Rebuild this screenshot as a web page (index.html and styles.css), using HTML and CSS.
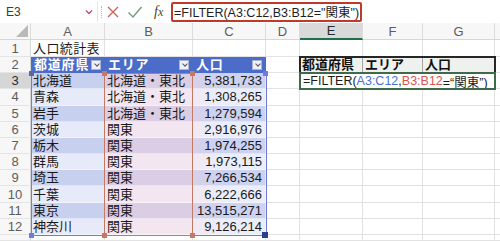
FILE: index.html
```html
<!DOCTYPE html>
<html lang="ja">
<head>
<meta charset="utf-8">
<link rel="stylesheet" href="styles.css">
</head>
<body>
<div class="app">
  <div class="fbar">
    <div class="namebox"><span class="nb-text">E3</span>
      <svg class="nb-arrow" width="8" height="6" viewBox="0 0 8 6"><path d="M1 1.5 L4 4.5 L7 1.5" fill="none" stroke="#c04a6a" stroke-width="1.3"/></svg>
    </div>
    <div class="fsep"></div>
    <div class="fbtn"><svg width="14" height="14" viewBox="0 0 14 14"><path d="M2 2 L12 12 M12 2 L2 12" stroke="#d06060" stroke-width="1.4" fill="none"/></svg></div>
    <div class="fbtn"><svg width="16" height="14" viewBox="0 0 16 14"><path d="M1.5 7.5 L6 12 L14.5 2" stroke="#6aa07a" stroke-width="1.4" fill="none"/></svg></div>
    <div class="fx">f<span class="fx-x">x</span></div>
    <div class="formula">=FILTER(A3:C12,B3:B12="関東")</div>
  </div>

  <div class="sheet">
    <!-- column headers -->
    <div class="c ch corner"><svg width="12" height="12" viewBox="0 0 12 12"><path d="M12 0 L12 12 L0 12 Z" fill="#b9b9b9"/></svg></div>
    <div class="c ch">A</div>
    <div class="c ch">B</div>
    <div class="c ch">C</div>
    <div class="c ch">D</div>
    <div class="c ch ch-sel">E</div>
    <div class="c ch">F</div>
    <div class="c ch">G</div>
    <div class="c ch last"></div>

    <!-- row 1 -->
    <div class="c rh">1</div>
    <div class="c txt title">人口統計表</div>
    <div class="c"></div><div class="c"></div><div class="c"></div><div class="c"></div><div class="c"></div><div class="c"></div><div class="c last"></div>

    <!-- row 2 -->
    <div class="c rh">2</div>
    <div class="c th"><span>都道府県</span><i class="dd"></i></div>
    <div class="c th"><span>エリア</span><i class="dd"></i></div>
    <div class="c th"><span>人口</span><i class="dd"></i></div>
    <div class="c"></div>
    <div class="c eh">都道府県</div>
    <div class="c eh">エリア</div>
    <div class="c eh">人口</div>
    <div class="c last"></div>

    <!-- rows 3-12 -->
    <div class="c rh rh-sel">3</div>
    <div class="c txt a odd">北海道</div><div class="c txt b odd">北海道・東北</div><div class="c num cc odd">5,381,733</div>
    <div class="c"></div><div class="c"></div><div class="c"></div><div class="c"></div><div class="c last"></div>

    <div class="c rh">4</div>
    <div class="c txt a even">青森</div><div class="c txt b even">北海道・東北</div><div class="c num cc even">1,308,265</div>
    <div class="c"></div><div class="c"></div><div class="c"></div><div class="c"></div><div class="c last"></div>

    <div class="c rh">5</div>
    <div class="c txt a odd">岩手</div><div class="c txt b odd">北海道・東北</div><div class="c num cc odd">1,279,594</div>
    <div class="c"></div><div class="c"></div><div class="c"></div><div class="c"></div><div class="c last"></div>

    <div class="c rh">6</div>
    <div class="c txt a even">茨城</div><div class="c txt b even">関東</div><div class="c num cc even">2,916,976</div>
    <div class="c"></div><div class="c"></div><div class="c"></div><div class="c"></div><div class="c last"></div>

    <div class="c rh">7</div>
    <div class="c txt a odd">栃木</div><div class="c txt b odd">関東</div><div class="c num cc odd">1,974,255</div>
    <div class="c"></div><div class="c"></div><div class="c"></div><div class="c"></div><div class="c last"></div>

    <div class="c rh">8</div>
    <div class="c txt a even">群馬</div><div class="c txt b even">関東</div><div class="c num cc even">1,973,115</div>
    <div class="c"></div><div class="c"></div><div class="c"></div><div class="c"></div><div class="c last"></div>

    <div class="c rh">9</div>
    <div class="c txt a odd">埼玉</div><div class="c txt b odd">関東</div><div class="c num cc odd">7,266,534</div>
    <div class="c"></div><div class="c"></div><div class="c"></div><div class="c"></div><div class="c last"></div>

    <div class="c rh">10</div>
    <div class="c txt a even">千葉</div><div class="c txt b even">関東</div><div class="c num cc even">6,222,666</div>
    <div class="c"></div><div class="c"></div><div class="c"></div><div class="c"></div><div class="c last"></div>

    <div class="c rh">11</div>
    <div class="c txt a odd">東京</div><div class="c txt b odd">関東</div><div class="c num cc odd">13,515,271</div>
    <div class="c"></div><div class="c"></div><div class="c"></div><div class="c"></div><div class="c last"></div>

    <div class="c rh">12</div>
    <div class="c txt a even">神奈川</div><div class="c txt b even">関東</div><div class="c num cc even">9,126,214</div>
    <div class="c"></div><div class="c"></div><div class="c"></div><div class="c"></div><div class="c last"></div>

    <div class="c rh"></div>
    <div class="c"></div><div class="c"></div><div class="c"></div><div class="c"></div><div class="c"></div><div class="c"></div><div class="c"></div><div class="c last"></div>

    <!-- overlays -->
    <div class="ref ref-blue"></div>
    <div class="ref ref-red"></div>
    <i class="hd hd-blue h-tl"></i>
    <i class="hd hd-blue h-tr"></i>
    <i class="hd hd-blue h-bl"></i>
    <i class="hd hd-navy h-br"></i>
    <i class="hd hd-red h-rtl"></i>
    <i class="hd hd-red h-rtr"></i>
    <i class="hd hd-red h-rbl"></i>
    <i class="hd hd-red h-rbr"></i>
    <div class="ebox-head"></div>
    <div class="ebox">=FILTER(<span class="r-blue">A3:C12</span>,<span class="r-red">B3:B12</span>=“関東”)</div>
  </div>
</div>
</body>
</html>
```

FILE: styles.css
```css
* { box-sizing: border-box; }
html, body { margin: 0; padding: 0; background: #ffffff; }
body { width: 500px; height: 241px; overflow: hidden; font-family: "Liberation Sans", "Noto Sans CJK JP", sans-serif; }

.app { width: 500px; height: 241px; display: flex; flex-direction: column; }

/* formula bar */
.fbar { height: 24px; display: flex; align-items: center; background: #fff; }
.namebox { width: 98px; height: 21px; display: flex; align-items: center; justify-content: space-between; padding: 0 4px 0 6px; border-right: 1px solid #e6e6e6; }
.nb-text { font-size: 12px; color: #3a3a3a; }
.nb-arrow { display: block; }
.fsep { width: 1px; height: 12px; margin-left: 3px; border-left: 1px dotted #bbb; }
.fbtn { width: 22px; display: flex; justify-content: center; align-items: center; }
.fbtn:first-of-type { margin-left: 0; }
.fsep + .fbtn { margin-left: 0; }
.fx { width: 17px; margin-left: 8px; font-family: "Liberation Serif", serif; font-style: italic; font-size: 14px; color: #444; }
.fx-x { font-size: 12px; }
.formula { height: 20px; width: 191px; border: 2px solid #c0392b; border-radius: 2px; font-size: 12.5px; color: #1e1e1e; display: flex; align-items: center; padding-left: 1px; white-space: nowrap; overflow: hidden; }

/* sheet */
.sheet { position: relative; display: grid;
  grid-template-columns: 31px 74px 88px 73px 34px 63px 60px 72px 5px;
  grid-template-rows: 17px 17px 16px repeat(10, 16.2px) 6px; }
.c { border-right: 1px solid #e2e2e2; border-bottom: 1px solid #e2e2e2; font-size: 13px; line-height: 1; display: flex; align-items: center; white-space: nowrap; min-width: 0; }
.c.last { border-right: 0; }

.ch { background: #f7f7f7; color: #5c5c5c; justify-content: center; font-size: 13px; border-bottom: 1px solid #d6d6d6; border-right: 1px solid #dcdcdc; }
.ch.corner { justify-content: flex-end; align-items: flex-end; padding: 0 2px 2px 0; }
.ch.corner svg { display: block; }
.ch-sel { background: #d9d9d9; color: #2a2a2a; border-bottom: 2px solid #1e7145; }

.rh { background: #f7f7f7; color: #5c5c5c; justify-content: center; font-size: 13px; border-right: 1px solid #d6d6d6; border-bottom: 1px solid #e4e4e4; }
.rh-sel { background: #d6d6d6; color: #2a2a2a; }

.txt { color: #1a1a1a; padding-left: 2px; }
.title { letter-spacing: 0.4px; }

.th { background: #4b6cc8; color: #ffffff; font-weight: 700; justify-content: space-between; padding: 0 3px 0 3px; border-right: 1px solid #4b6cc8; border-bottom: 1px solid #4b6cc8; letter-spacing: 0.8px; }
.dd { width: 10px; height: 10px; background: #eef1f8; border: 1px solid #aab3cf; position: relative; display: block; }
.dd::after { content: ""; position: absolute; left: 2.5px; top: 1.5px; width: 3px; height: 3px; border-right: 1px solid #555; border-bottom: 1px solid #555; transform: rotate(45deg); }

.a.odd { background: #c8d0ef; }
.a.even { background: #e7ebf9; }
.b.odd { background: #dacde4; }
.b.even { background: #f3e6f0; }
.cc.odd { background: linear-gradient(90deg, #d8d0ea, #ccd2f1 40%); }
.cc.even { background: linear-gradient(90deg, #f2e9f3, #eaedfa 40%); }
.a, .b, .cc { border-right-color: rgba(255,255,255,0.4); border-bottom-color: rgba(255,255,255,0.45); }

.num { justify-content: flex-end; padding-right: 3px; font-size: 13px; color: #1a1a1a; }

.eh { background: #eff1ef; font-weight: 700; color: #111; padding-left: 2px; border-right: 1px solid #a6a6a6; }

/* overlays */
.ref { position: absolute; top: 50px; height: 163px; pointer-events: none; }
.ref-blue { left: 31px; width: 236px; border: 1.5px solid #6f79e0; border-top: 0; }
.ref-red { left: 104px; width: 89px; border: 1.5px solid #c27b62; }

.hd { position: absolute; width: 5px; height: 5px; display: block; }
.hd-blue { background: #7079e2; }
.hd-navy { background: #2b3d8f; }
.hd-red { background: #c27b62; }
.h-tl { left: 29px; top: 48px; background: #5a6a9a; }
.h-tr { left: 263px; top: 48px; }
.h-bl { left: 29px; top: 210px; }
.h-br { left: 262px; top: 209px; width: 6px; height: 6px; }
.h-rtl { left: 102px; top: 48px; }
.h-rtr { left: 190px; top: 48px; }
.h-rbl { left: 102px; top: 210px; }
.h-rbr { left: 190px; top: 210px; }

.ebox-head { position: absolute; left: 299px; top: 33px; width: 197px; height: 18px; border: 2px solid #262626; pointer-events: none; }
.ebox { position: absolute; left: 299px; top: 49px; width: 197px; height: 18px; border: 2px solid #3c6a4a; background: #ffffff; font-size: 12.5px; color: #1a1a1a; display: flex; align-items: center; padding-left: 2px; white-space: nowrap; overflow: hidden; }
.r-blue { color: #4a6fd8; }
.r-red { color: #d9534f; }
```
